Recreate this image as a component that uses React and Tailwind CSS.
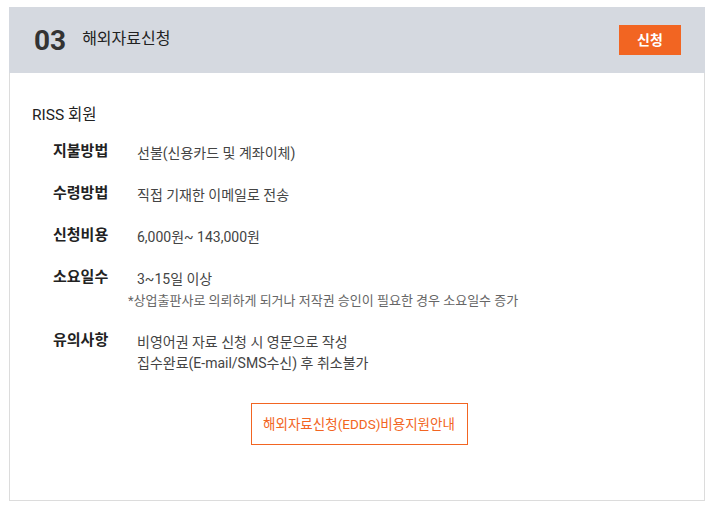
export default function App() {
  const font = { fontFamily: 'Roboto, "Noto Sans CJK KR", sans-serif' };
  return (
    <div className="w-[715px] h-[513px] bg-white pt-[7px] pl-[9px]" style={font}>
      <div className="w-[696px] h-[494px] border border-[#dcdcdc] border-t-0 flex flex-col">
        <div className="h-[66px] bg-[#d5d9e0] flex items-center pl-[25px] pr-[24px] -mx-px">
          <span className="text-[28px] font-bold text-[#333] leading-none mt-[2px]">03</span>
          <span className="ml-[16px] text-[16px] text-[#222] mt-[-2px]">해외자료신청</span>
          <div className="ml-auto w-[62px] h-[30px] bg-[#f26522] text-white text-[14px] font-bold flex items-center justify-center">신청</div>
        </div>
        <div className="pt-[31px] pl-[22px]">
          <div className="text-[15.5px] text-[#222] leading-[22px]">RISS 회원</div>
          <div className="pl-[21px] mt-[17px] flex flex-col gap-[21px] text-[#444]">
            <Row label="지불방법"><div>선불(신용카드 및 계좌이체)</div></Row>
            <Row label="수령방법"><div>직접 기재한 이메일로 전송</div></Row>
            <Row label="신청비용"><div>6,000원~ 143,000원</div></Row>
            <Row label="소요일수">
              <div>3~15일 이상</div>
              <div className="text-[13px] text-[#666] ml-[-9px] leading-[21px]">*상업출판사로 의뢰하게 되거나 저작권 승인이 필요한 경우 소요일수 증가</div>
            </Row>
            <Row label="유의사항">
              <div>비영어권 자료 신청 시 영문으로 작성</div>
              <div>집수완료(E-mail/SMS수신) 후 취소불가</div>
            </Row>
          </div>
          <div className="flex justify-center mt-[29px] pr-[22px]">
            <div className="ml-[4px] w-[217px] h-[42px] border border-[#f26522] text-[#f26522] text-[13.5px] flex items-center justify-center">해외자료신청(EDDS)비용지원안내</div>
          </div>
        </div>
      </div>
    </div>
  );
}

function Row({ label, children }) {
  return (
    <div className="flex">
      <div className="w-[84px] text-[15px] font-bold text-[#222] leading-[20px] mt-[-2px]">{label}</div>
      <div className="text-[14px] leading-[21px] text-[#444]">{children}</div>
    </div>
  );
}
